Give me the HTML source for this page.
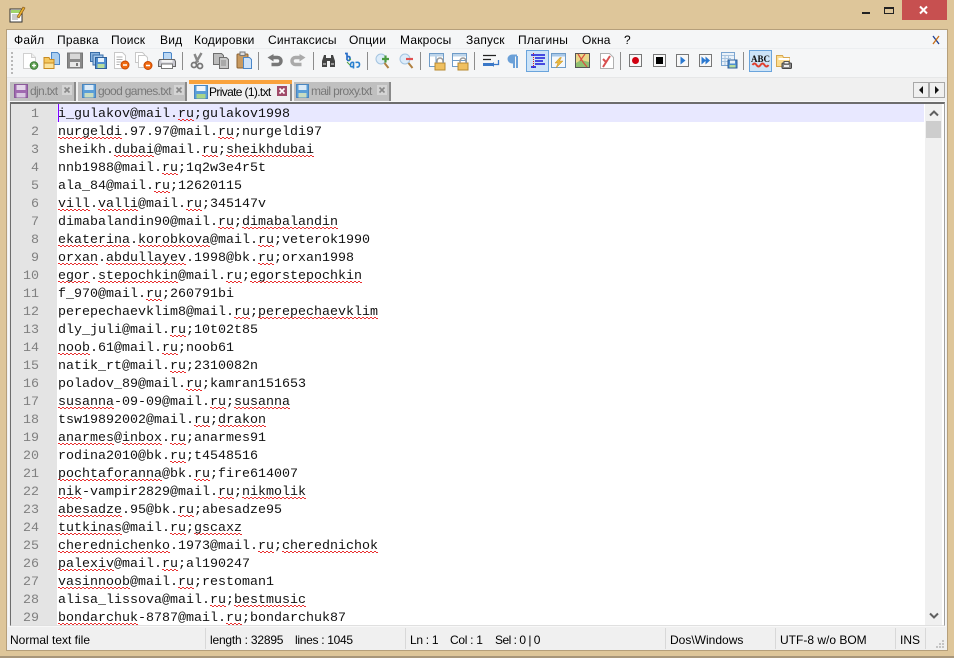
<!DOCTYPE html>
<html><head><meta charset="utf-8">
<style>
html,body{margin:0;padding:0;width:954px;height:658px;overflow:hidden;background:#dec69a;font-family:"Liberation Sans",sans-serif;}
div{position:absolute;box-sizing:border-box}
.m{top:32px;font-size:12px;line-height:16px;color:#000;white-space:nowrap;letter-spacing:.2px}
.sep{top:52px;width:1px;height:18px;background:#8c8c8c}
svg{position:absolute;overflow:visible}
.tab{top:82px;height:19px;font-size:12px;line-height:19px;color:#787878;white-space:nowrap;letter-spacing:-.65px}
.n{left:11px;width:28px;margin-top:2px;text-align:right;color:#808080;font-family:"Liberation Mono",monospace;font-size:13.33px;line-height:18px;height:18px}
.l{left:58px;margin-top:2px;font-family:"Liberation Mono",monospace;font-size:13.33px;line-height:18px;height:18px;color:#111;white-space:pre}
u{text-decoration:none;display:inline-block;height:18px;background:repeating-linear-gradient(90deg,#e83030 0 2px,transparent 2px 4px) 0 13px/100% 1px no-repeat,repeating-linear-gradient(90deg,transparent 0 2px,#e83030 2px 4px) 0 14px/100% 1px no-repeat}
.s{top:632px;font-size:12px;line-height:16px;color:#000;white-space:nowrap}
.ss{top:628px;width:1px;height:21px;background:#d8d8d8}
</style></head><body>
<!-- title bar -->
<svg style="left:9px;top:6px" width="17" height="17" viewBox="0 0 17 17"><rect x="1" y="3" width="12" height="13" fill="#fff" stroke="#333"/><rect x="2" y="4" width="10" height="3" fill="#9fd46a"/><path d="M3 9h8M3 11h8M3 13h6" stroke="#999"/><path d="M8 11L14 1l2 1-6 10z" fill="#e8b030" stroke="#7a4a10" stroke-width=".6"/></svg>
<div style="left:862px;top:12px;width:8px;height:2px;background:#222"></div>
<div style="left:884px;top:7px;width:10px;height:7px;border:1px solid #222;border-top-width:2px"></div>
<div style="left:902px;top:0;width:45px;height:20px;background:#c75050"></div>
<svg style="left:918px;top:5px" width="12" height="10"><path d="M2 1.500l7 7M9 1.500l-7 7" stroke="#fff" stroke-width="2"/></svg>

<!-- client -->
<div style="left:6px;top:29px;width:942px;height:622px;background:#f0f0f0;border:1px solid #b59f7b"></div>
<div style="left:7px;top:30px;width:940px;height:18px;background:#f5f6f7"></div>
<div style="left:7px;top:48px;width:940px;height:30px;background:#f5f6f7;border-top:1px solid #eceef0;border-bottom:1px solid #e6e7e8"></div>

<div class="m" style="left:14px">Файл</div>
<div class="m" style="left:57px">Правка</div>
<div class="m" style="left:111px">Поиск</div>
<div class="m" style="left:160px">Вид</div>
<div class="m" style="left:194px">Кодировки</div>
<div class="m" style="left:268px">Синтаксисы</div>
<div class="m" style="left:349px">Опции</div>
<div class="m" style="left:400px">Макросы</div>
<div class="m" style="left:466px">Запуск</div>
<div class="m" style="left:518px">Плагины</div>
<div class="m" style="left:582px">Окна</div>
<div class="m" style="left:624px">?</div>
<svg style="left:932px;top:35px" width="9" height="10"><path d="M1 1l6 8" stroke="#1c3f94" stroke-width="1.3"/><path d="M7 1L1 9" stroke="#c8701a" stroke-width="1.3"/></svg>

<!-- toolbar grip -->
<svg style="left:11px;top:51px" width="3" height="24"><path d="M1 1v22" stroke="#b8b8b8" stroke-width="2" stroke-dasharray="2 2"/></svg>

<!-- new -->
<svg style="left:21px;top:52px" width="18" height="18"><path d="M2.5 1.500h8l4 4v11h-12z" fill="#fff" stroke="#d0d0d0"/><path d="M10.500 1.500v4h4" fill="#eee" stroke="#d0d0d0"/><circle cx="13" cy="13.500" r="3.800" fill="#5fa052" stroke="#3b7a35"/><path d="M11 13.500h4M13 11.500v4" stroke="#fff" stroke-width="1.300"/></svg>
<!-- open -->
<svg style="left:43px;top:52px" width="18" height="18"><path d="M8.500 .5h6l2 2v10h-8z" fill="#a8cdf0" stroke="#4a86c8"/><path d="M1 5.500h5l1 2h4v9H1z" fill="#f5c860" stroke="#c88a20"/><path d="M1 11h10v5.500H1z" fill="#fbe39c" stroke="#c88a20"/></svg>
<!-- save -->
<svg style="left:67px;top:52px" width="17" height="17"><path d="M.5 1h15v15H.5z" fill="#8a8a8a" stroke="#777"/><rect x="3" y="1.500" width="10" height="5.500" fill="#d8d8d8"/><rect x="3" y="10" width="10" height="5" fill="#e8e8e8"/><rect x="9" y="11" width="2" height="3" fill="#777"/></svg>
<!-- save all -->
<svg style="left:90px;top:52px" width="17" height="17"><rect x=".5" y=".5" width="9" height="9" fill="#8ab4e0" stroke="#3a6ea8"/><rect x="3" y="3" width="10" height="10" fill="#a4c8ec" stroke="#3a6ea8"/><rect x="5.500" y="5.500" width="11" height="11" fill="#4f8ed0" stroke="#2f5f98"/><rect x="8" y="6" width="6" height="4" fill="#e6f0fa"/><rect x="7.500" y="12" width="7" height="4" fill="#b6dc9c"/></svg>
<!-- close -->
<svg style="left:113px;top:52px" width="17" height="18"><path d="M1.500 .5h8l3 3v13h-11z" fill="#fff" stroke="#c8c8c8"/><path d="M3.500 5h6M3.500 7.500h6M3.500 10h5M3.500 12.500h3" stroke="#b0b0b0"/><circle cx="12" cy="13" r="4" fill="#f06a10" stroke="#c84800"/><path d="M10 13h4" stroke="#fff" stroke-width="1.500"/></svg>
<!-- close all -->
<svg style="left:135px;top:52px" width="18" height="18"><path d="M.5 .5h7l2 2v8h-9z" fill="#fff" stroke="#c8c8c8"/><path d="M3.500 3.500h7l2 2v10h-9z" fill="#fff" stroke="#c8c8c8"/><circle cx="13" cy="13.500" r="4" fill="#f06a10" stroke="#c84800"/><path d="M11 13.500h4" stroke="#fff" stroke-width="1.500"/></svg>
<!-- print -->
<svg style="left:158px;top:52px" width="18" height="18"><path d="M5.500 .5h7l1 1v6h-8z" fill="#bcd8f4" stroke="#4a86c8"/><path d="M1.500 7.500h15l1 2v5h-17v-5z" fill="#c8c8d0" stroke="#666"/><rect x="3.500" y="8" width="11" height="2.500" fill="#f4f4f4"/><rect x="3.500" y="12" width="11" height="4.500" fill="#fff" stroke="#777"/></svg>
<div class="sep" style="left:182px"></div>
<!-- cut -->
<svg style="left:189px;top:52px" width="16" height="18"><path d="M12.500 1L7 10.500M5.500 2l3.500 8.500" stroke="#888" stroke-width="2.400"/><circle cx="5" cy="13" r="2.500" fill="none" stroke="#777" stroke-width="1.800"/><circle cx="11" cy="14" r="2.500" fill="none" stroke="#777" stroke-width="1.800"/></svg>
<!-- copy -->
<svg style="left:213px;top:52px" width="17" height="18"><path d="M.5 1.500h8l2 2v9H.5z" fill="#bdbdbd" stroke="#6e6e6e"/><path d="M6.500 5.500h7l2 2v9h-9z" fill="#c8c8c8" stroke="#6e6e6e"/><path d="M8 9h5M8 11h5M8 13h5" stroke="#8a8a8a"/></svg>
<!-- paste -->
<svg style="left:236px;top:51px" width="17" height="19"><rect x="1" y="3" width="11" height="14" rx="1" fill="#c89a60" stroke="#8a6030"/><rect x="4" y="1" width="5" height="3.500" fill="#ddd" stroke="#777"/><path d="M7.500 6.500h6l2 2v9h-8z" fill="#cfe3f8" stroke="#4a86c8"/></svg>
<div class="sep" style="left:258px"></div>
<!-- undo -->
<svg style="left:267px;top:54px" width="16" height="14"><path d="M5.500 3.500h5a3.500 3.500 0 0 1 0 7h-6" fill="none" stroke="#777" stroke-width="3.500"/><path d="M.5 3.500l6-3.500v7.500z" fill="#777"/></svg>
<!-- redo -->
<svg style="left:290px;top:54px" width="16" height="14"><path d="M10.500 3.500h-5a3.500 3.500 0 0 0 0 7h6" fill="none" stroke="#aaa" stroke-width="3.500"/><path d="M15.500 3.500l-6-3.500v7.500z" fill="#aaa"/></svg>
<div class="sep" style="left:313px"></div>
<!-- find -->
<svg style="left:321px;top:53px" width="15" height="15"><path d="M1 8l2-6h2v3h5V2h2l2 6v6H9V8H6v6H1z" fill="#444"/><rect x="2" y="10" width="3" height="2" fill="#999"/><rect x="10" y="10" width="3" height="2" fill="#999"/></svg>
<!-- replace -->
<svg style="left:344px;top:52px" width="17" height="18"><path d="M1 1.500h2v6.500M3 5q3-1.500 3 1.500t-3 1.500" fill="none" stroke="#2a6ec8" stroke-width="1.700"/><path d="M9 14.500q-3 1-2.500-2t3-2v6" fill="none" stroke="#2a80d0" stroke-width="1.600"/><path d="M11.500 10.500q4-1 4 2t-3 2.500" fill="none" stroke="#2a80d0" stroke-width="1.600"/><path d="M3 10l3 3M7 7l-2 1" stroke="#4aa040"/></svg>
<div class="sep" style="left:367px"></div>
<!-- zoom in/out -->
<svg style="left:375px;top:53px" width="16" height="17"><circle cx="6" cy="6" r="5" fill="#dcecfa" stroke="#a4c4e0"/><path d="M9.500 10l4 5" stroke="#b08040" stroke-width="2"/><path d="M7 6h7M10.500 2.500v7" stroke="#4a9a40" stroke-width="2.200"/></svg>
<svg style="left:399px;top:53px" width="16" height="17"><circle cx="6" cy="6" r="5" fill="#dcecfa" stroke="#a4c4e0"/><path d="M9.500 10l4 5" stroke="#b08040" stroke-width="2"/><path d="M7 6h7" stroke="#e05050" stroke-width="2.200"/></svg>
<div class="sep" style="left:420px"></div>
<!-- sync -->
<svg style="left:429px;top:53px" width="16" height="17"><rect x=".5" y=".5" width="14" height="13" fill="#fff" stroke="#6f9cc8"/><rect x="1" y="1" width="13" height="2.500" fill="#bcd4ea"/><path d="M7 3.500v10" stroke="#6f9cc8"/><rect x="6" y="10" width="10" height="7" fill="#f0c060" stroke="#b88a30"/><path d="M8 10V8a3 3 0 0 1 6 0v2" fill="none" stroke="#999" stroke-width="1.500"/></svg>
<svg style="left:452px;top:53px" width="16" height="17"><rect x=".5" y=".5" width="14" height="13" fill="#fff" stroke="#6f9cc8"/><rect x="1" y="1" width="13" height="2.500" fill="#bcd4ea"/><path d="M1 7.500h13" stroke="#6f9cc8"/><rect x="6" y="10" width="10" height="7" fill="#f0c060" stroke="#b88a30"/><path d="M8 10V8a3 3 0 0 1 6 0v2" fill="none" stroke="#999" stroke-width="1.500"/></svg>
<div class="sep" style="left:474px"></div>
<!-- wrap -->
<svg style="left:483px;top:54px" width="17" height="14"><path d="M0 1.500h13M0 5.500h8" stroke="#222" stroke-width="1.300"/><path d="M0 10.500h11" stroke="#3a78c8" stroke-width="3"/><path d="M15.500 6v4.500h-5" fill="none" stroke="#3a78c8" stroke-width="1.300"/><path d="M11 8v5l-2.500-2.500z" fill="#3a78c8"/></svg>
<!-- pilcrow -->
<svg style="left:508px;top:55px" width="11" height="13"><path d="M9 .5H4a3.500 3.500 0 0 0 0 7h1.500M6 1v12M9 1v12" fill="none" stroke="#6aa0d8" stroke-width="2"/><path d="M1 4a3 3 0 0 1 4-3v6a3 3 0 0 1-4-3z" fill="#6aa0d8"/></svg>
<!-- indent active -->
<div style="left:526px;top:50px;width:23px;height:22px;background:#cde4f8;border:1px solid #6aa4dc"></div>
<svg style="left:530px;top:53px" width="16" height="16"><path d="M3.500 0v16" stroke="#e02020" stroke-dasharray="1 1"/><path d="M1 2h14M5 5h10M5 8h8M5 11h10" stroke="#1818d8" stroke-width="1.600"/><path d="M1 14h5" stroke="#1818d8" stroke-width="1.600"/></svg>
<!-- doc map style -->
<svg style="left:551px;top:53px" width="16" height="16"><rect x=".5" y=".5" width="14" height="14" fill="#f4f8fc" stroke="#6f9cc8"/><rect x="1" y="1" width="13" height="2.500" fill="#a8c8e8"/><path d="M9 4.500L4 10h3l-2 5 7-7H8.500l2-3.500z" fill="#e8b840" stroke="#c89020" stroke-width=".5"/></svg>
<svg style="left:575px;top:53px" width="16" height="16"><rect x=".5" y=".5" width="14" height="14" fill="#e8d888" stroke="#555"/><path d="M1 10L6 7l8 2v5H1z" fill="#90c070"/><path d="M3 1l5 8 4 5M10 1L5 8" stroke="#d85040" stroke-width="1.200" fill="none"/></svg>
<svg style="left:599px;top:53px" width="16" height="16"><path d="M1.500 .5h9l4 4v11h-13z" fill="#fff" stroke="#b0b0b0"/><path d="M4 14L11 3M4 6l3 3" stroke="#d85050" stroke-width="2"/></svg>
<div class="sep" style="left:620px"></div>
<!-- macro -->
<svg style="left:629px;top:54px" width="14" height="14"><rect x=".5" y=".5" width="12" height="12" fill="#f8f8f8" stroke="#777"/><circle cx="6.500" cy="6.500" r="3.500" fill="#d00010"/></svg>
<svg style="left:653px;top:54px" width="14" height="14"><rect x=".5" y=".5" width="12" height="12" fill="#f8f8f8" stroke="#777"/><rect x="3" y="3" width="7" height="7" fill="#000"/></svg>
<svg style="left:676px;top:54px" width="14" height="14"><rect x=".5" y=".5" width="12" height="12" fill="#f8f8f8" stroke="#777"/><path d="M4.500 2.500l5 4-5 4z" fill="#2a78d0"/></svg>
<svg style="left:699px;top:54px" width="14" height="14"><rect x=".5" y=".5" width="12" height="12" fill="#f8f8f8" stroke="#777"/><path d="M2.500 2.500l4.500 4-4.500 4zM6.500 2.500l4.500 4-4.500 4z" fill="#2a78d0"/></svg>
<svg style="left:721px;top:52px" width="17" height="17"><rect x=".5" y=".5" width="13" height="13" fill="#eaf2fa" stroke="#7aa4d0"/><path d="M1 3.500h12M1 6.500h9M1 9.500h7M4 4v9M7.500 4v9" stroke="#a8c4e0"/><rect x="7" y="8" width="9" height="8" fill="#4f8ed0" stroke="#2f5f98"/><rect x="9" y="8.500" width="5" height="3" fill="#e8f0f8"/><rect x="8.500" y="13" width="6" height="2.500" fill="#b6dc9c"/></svg>
<div class="sep" style="left:743px"></div>
<!-- ABC active -->
<div style="left:749px;top:50px;width:23px;height:22px;background:#cde4f8;border:1px solid #6aa4dc"></div>
<div style="left:749px;top:54px;width:23px;text-align:center;font:bold 9px/10px 'Liberation Serif',serif;color:#111;letter-spacing:0">ABC</div>
<svg style="left:752px;top:62px" width="17" height="5"><path d="M.5 3q2-3 4 0t4 0 4 0 4 0" fill="none" stroke="#e04030" stroke-width="2"/></svg>
<!-- folder -->
<svg style="left:776px;top:54px" width="16" height="16"><path d="M.5 1.500h6l1 2h6v9H.5z" fill="#fbdc90" stroke="#d8a850"/><path d="M2.500 5h11" stroke="#fff" stroke-width="2"/><rect x="6" y="9" width="9.500" height="5.500" rx="1" fill="#888" stroke="#444"/><rect x="8" y="7.500" width="5" height="2.500" fill="#eee" stroke="#555"/><rect x="8" y="11" width="5" height="2" fill="#eee"/></svg>

<!-- tab bar -->
<div style="left:7px;top:78px;width:940px;height:24px;background:#f0f0f0"></div>
<div style="left:10px;top:82px;width:66px;height:19px;background:#c0c0c0;border-right:2px solid #8a8a8a"></div>
<svg style="left:14px;top:84px" width="14" height="14"><rect x=".5" y=".5" width="13" height="13" fill="#a06ab0" stroke="#8a5a9a"/><rect x="2.500" y="1" width="9" height="5" fill="#e4d6ea"/><rect x="2.500" y="9" width="9" height="4.500" fill="#d8c8e0"/></svg>
<div class="tab" style="left:30px">djn.txt</div>
<svg style="left:62px;top:85px" width="11" height="11"><rect width="10" height="10" fill="#d4d4d4"/><path d="M2.500 2.500l5 5M7.500 2.500l-5 5" stroke="#888" stroke-width="1.600"/></svg>

<div style="left:78px;top:82px;width:109px;height:19px;background:#c0c0c0;border-right:2px solid #8a8a8a"></div>
<svg style="left:82px;top:84px" width="14" height="14"><rect x=".5" y=".5" width="13" height="13" fill="#5a9ed8" stroke="#4a86c0"/><rect x="2.500" y="1" width="9" height="5" fill="#dcebf8"/><rect x="2.500" y="9" width="9" height="4.500" fill="#c8dcc0"/></svg>
<div class="tab" style="left:98px">good games.txt</div>
<svg style="left:174px;top:85px" width="11" height="11"><rect width="10" height="10" fill="#d4d4d4"/><path d="M2.500 2.500l5 5M7.500 2.500l-5 5" stroke="#888" stroke-width="1.600"/></svg>

<div style="left:189px;top:84px;width:103px;height:18px;background:#f0f0f0;border-right:2px solid #8a8a8a"></div>
<div style="left:189px;top:80px;width:103px;height:4px;background:#f9a23c"></div>
<svg style="left:194px;top:85px" width="14" height="14"><rect x=".5" y=".5" width="13" height="13" fill="#5a9ed8" stroke="#4a86c0"/><rect x="2.500" y="1" width="9" height="5" fill="#f0f6fc"/><rect x="2.500" y="9" width="9" height="4.500" fill="#a8d488"/></svg>
<div class="tab" style="left:209px;top:83px;color:#000">Private (1).txt</div>
<svg style="left:277px;top:86px" width="11" height="11"><rect width="10" height="10" fill="#a04a68"/><path d="M2.500 2.500l5 5M7.500 2.500l-5 5" stroke="#fff" stroke-width="1.600"/></svg>

<div style="left:294px;top:82px;width:97px;height:19px;background:#c0c0c0;border-right:2px solid #8a8a8a"></div>
<svg style="left:296px;top:84px" width="13" height="14"><rect x=".5" y=".5" width="12" height="13" fill="#5a9ed8" stroke="#4a86c0"/><rect x="2.500" y="1" width="8" height="5" fill="#dcebf8"/><rect x="2.500" y="9" width="8" height="4.500" fill="#c8dcc0"/></svg>
<div class="tab" style="left:311px">mail proxy.txt</div>
<svg style="left:377px;top:85px" width="11" height="11"><rect width="10" height="10" fill="#d4d4d4"/><path d="M2.500 2.500l5 5M7.500 2.500l-5 5" stroke="#888" stroke-width="1.600"/></svg>

<div style="left:913px;top:82px;width:16px;height:16px;background:#f0f0f0;border:1px solid #a8a8a8"></div>
<div style="left:929px;top:82px;width:16px;height:16px;background:#f0f0f0;border:1px solid #a8a8a8"></div>
<svg style="left:919px;top:86px" width="5" height="8"><path d="M4 0v8L0 4z" fill="#111"/></svg>
<svg style="left:935px;top:86px" width="5" height="8"><path d="M0 0v8l4-4z" fill="#111"/></svg>

<!-- editor -->
<div style="left:8px;top:101px;width:938px;height:526px;background:#f0f0f0;border:1px solid #f8f8f8"></div>
<div style="left:10px;top:102px;width:935px;height:524px;background:#fff;border-top:2px solid #6d6d6d;border-left:1px solid #6d6d6d;border-right:1px solid #a0a0a0;border-bottom:1px solid #e0e0e0"></div>
<div style="left:11px;top:104px;width:46px;height:521px;background:#e4e4e4"></div>
<div style="left:57px;top:104px;width:867px;height:18px;background:#e8e8ff"></div>
<div style="left:58px;top:104px;width:1px;height:18px;background:#8000ff;z-index:2"></div>
<div style="left:925px;top:104px;width:17px;height:521px;background:#f0f0f0"></div>
<div style="left:926px;top:121px;width:15px;height:17px;background:#cdcdcd"></div>
<svg style="left:929px;top:110px" width="10" height="7"><path d="M1 5.500l4-4 4 4" fill="none" stroke="#606060" stroke-width="2"/></svg>
<svg style="left:929px;top:612px" width="10" height="7"><path d="M1 1.500l4 4 4-4" fill="none" stroke="#606060" stroke-width="2"/></svg>

<div style="left:0;top:104px;width:954px;height:521px;overflow:hidden;background:none">
<div class="n" style="top:0">1</div><div class="l" style="top:0">i_gulakov@mail.<u>ru</u>;gulakov1998</div>
<div class="n" style="top:18px">2</div><div class="l" style="top:18px"><u>nurgeldi</u>.97.97@mail.<u>ru</u>;nurgeldi97</div>
<div class="n" style="top:36px">3</div><div class="l" style="top:36px">sheikh.<u>dubai</u>@mail.<u>ru</u>;<u>sheikhdubai</u></div>
<div class="n" style="top:54px">4</div><div class="l" style="top:54px">nnb1988@mail.<u>ru</u>;1q2w3e4r5t</div>
<div class="n" style="top:72px">5</div><div class="l" style="top:72px">ala_84@mail.<u>ru</u>;12620115</div>
<div class="n" style="top:90px">6</div><div class="l" style="top:90px"><u>vill</u>.<u>valli</u>@mail.<u>ru</u>;345147v</div>
<div class="n" style="top:108px">7</div><div class="l" style="top:108px">dimabalandin90@mail.<u>ru</u>;<u>dimabalandin</u></div>
<div class="n" style="top:126px">8</div><div class="l" style="top:126px"><u>ekaterina</u>.<u>korobkova</u>@mail.<u>ru</u>;veterok1990</div>
<div class="n" style="top:144px">9</div><div class="l" style="top:144px"><u>orxan</u>.<u>abdullayev</u>.1998@bk.<u>ru</u>;orxan1998</div>
<div class="n" style="top:162px">10</div><div class="l" style="top:162px"><u>egor</u>.<u>stepochkin</u>@mail.<u>ru</u>;<u>egorstepochkin</u></div>
<div class="n" style="top:180px">11</div><div class="l" style="top:180px">f_970@mail.<u>ru</u>;260791bi</div>
<div class="n" style="top:198px">12</div><div class="l" style="top:198px">perepechaevklim8@mail.<u>ru</u>;<u>perepechaevklim</u></div>
<div class="n" style="top:216px">13</div><div class="l" style="top:216px">dly_juli@mail.<u>ru</u>;10t02t85</div>
<div class="n" style="top:234px">14</div><div class="l" style="top:234px"><u>noob</u>.61@mail.<u>ru</u>;noob61</div>
<div class="n" style="top:252px">15</div><div class="l" style="top:252px">natik_rt@mail.<u>ru</u>;2310082n</div>
<div class="n" style="top:270px">16</div><div class="l" style="top:270px">poladov_89@mail.<u>ru</u>;kamran151653</div>
<div class="n" style="top:288px">17</div><div class="l" style="top:288px"><u>susanna</u>-09-09@mail.<u>ru</u>;<u>susanna</u></div>
<div class="n" style="top:306px">18</div><div class="l" style="top:306px">tsw19892002@mail.<u>ru</u>;<u>drakon</u></div>
<div class="n" style="top:324px">19</div><div class="l" style="top:324px"><u>anarmes</u>@<u>inbox</u>.<u>ru</u>;anarmes91</div>
<div class="n" style="top:342px">20</div><div class="l" style="top:342px">rodina2010@bk.<u>ru</u>;t4548516</div>
<div class="n" style="top:360px">21</div><div class="l" style="top:360px"><u>pochtaforanna</u>@bk.<u>ru</u>;fire614007</div>
<div class="n" style="top:378px">22</div><div class="l" style="top:378px"><u>nik</u>-vampir2829@mail.<u>ru</u>;<u>nikmolik</u></div>
<div class="n" style="top:396px">23</div><div class="l" style="top:396px"><u>abesadze</u>.95@bk.<u>ru</u>;abesadze95</div>
<div class="n" style="top:414px">24</div><div class="l" style="top:414px"><u>tutkinas</u>@mail.<u>ru</u>;<u>gscaxz</u></div>
<div class="n" style="top:432px">25</div><div class="l" style="top:432px"><u>cherednichenko</u>.1973@mail.<u>ru</u>;<u>cherednichok</u></div>
<div class="n" style="top:450px">26</div><div class="l" style="top:450px"><u>palexiv</u>@mail.<u>ru</u>;al190247</div>
<div class="n" style="top:468px">27</div><div class="l" style="top:468px"><u>vasinnoob</u>@mail.<u>ru</u>;restoman1</div>
<div class="n" style="top:486px">28</div><div class="l" style="top:486px">alisa_lissova@mail.<u>ru</u>;<u>bestmusic</u></div>
<div class="n" style="top:504px">29</div><div class="l" style="top:504px"><u>bondarchuk</u>-8787@mail.<u>ru</u>;bondarchuk87</div>
</div>

<!-- status -->
<div class="s" style="left:10px">Normal text file</div>
<div class="ss" style="left:205px"></div>
<div class="s" style="left:210px;letter-spacing:-.2px">length : 32895</div>
<div class="s" style="left:295px;letter-spacing:-.3px">lines : 1045</div>
<div class="ss" style="left:405px"></div>
<div class="s" style="left:410px;letter-spacing:-.3px">Ln : 1</div>
<div class="s" style="left:450px;letter-spacing:-.3px">Col : 1</div>
<div class="s" style="left:495px;letter-spacing:-.5px">Sel : 0 | 0</div>
<div class="ss" style="left:665px"></div>
<div class="s" style="left:670px">Dos\Windows</div>
<div class="ss" style="left:775px"></div>
<div class="s" style="left:780px">UTF-8 w/o BOM</div>
<div class="ss" style="left:895px"></div>
<div class="s" style="left:900px">INS</div>
<div class="ss" style="left:925px"></div>
<svg style="left:935px;top:639px" width="10" height="10"><path d="M7 1h2v2H7zM4 4h2v2H4zM7 4h2v2H7zM1 7h2v2H1zM4 7h2v2H4zM7 7h2v2H7z" fill="#c4c4c4"/></svg>
<div style="left:0;top:656px;width:954px;height:2px;background:#a8967a"></div>
</body></html>
